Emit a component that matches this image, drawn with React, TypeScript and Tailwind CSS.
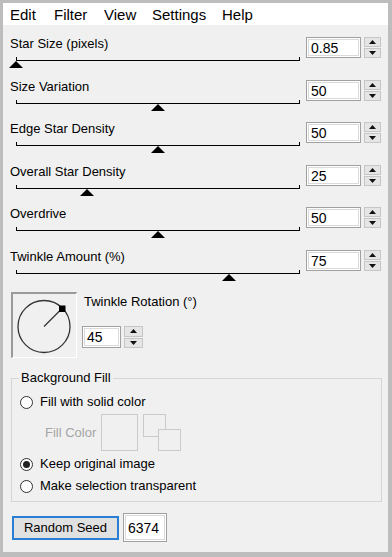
import clsx from 'clsx';

type SliderRow = { label: string; value: string; pct: number; h: string };

const rows: SliderRow[] = [
  { label: 'Star Size (pixels)', value: '0.85', pct: 0, h: 'h-[43px]' },
  { label: 'Size Variation', value: '50', pct: 50, h: 'h-[42px]' },
  { label: 'Edge Star Density', value: '50', pct: 50, h: 'h-[43px]' },
  { label: 'Overall Star Density', value: '25', pct: 25, h: 'h-[42px]' },
  { label: 'Overdrive', value: '50', pct: 50, h: 'h-[43px]' },
  { label: 'Twinkle Amount (%)', value: '75', pct: 75, h: 'h-[43px]' },
];

const menu = [
  { name: 'Edit', w: 'w-[44px]' },
  { name: 'Filter', w: 'w-[50px]' },
  { name: 'View', w: 'w-[48px]' },
  { name: 'Settings', w: 'w-[70px]' },
  { name: 'Help', w: 'w-[40px]' },
];

const NumBox: React.FC<{ value: string; className?: string }> = ({ value, className }) => (
  <div className={clsx('border border-[#a0a0a0] bg-white p-px', className)}>
    <div className="flex h-full items-center border border-[#dadada] pl-[2px] text-[14px] leading-none">
      {value}
    </div>
  </div>
);

const Spinner: React.FC<{ className?: string }> = ({ className }) => (
  <div className={clsx('flex flex-col gap-px', className)}>
    <div className="flex flex-1 items-center justify-center border border-[#c6c6c6] bg-[#e5e5e5]">
      <svg width="7" height="4" viewBox="0 0 7 4">
        <polygon points="3.5,0 7,4 0,4" fill="#111" />
      </svg>
    </div>
    <div className="flex flex-1 items-center justify-center border border-[#c6c6c6] bg-[#e5e5e5]">
      <svg width="7" height="4" viewBox="0 0 7 4">
        <polygon points="0,0 7,0 3.5,4" fill="#111" />
      </svg>
    </div>
  </div>
);

const Radio: React.FC<{ label: string; checked?: boolean; className?: string }> = ({
  label,
  checked,
  className,
}) => (
  <div className={clsx('flex h-[20px] items-center', className)}>
    <div className="ml-px flex h-[13px] w-[13px] items-center justify-center rounded-full border border-[#333] bg-white">
      {checked && <div className="h-[7px] w-[7px] rounded-full bg-[#222]" />}
    </div>
    <span className="ml-[7px] text-[13px] leading-4">{label}</span>
  </div>
);

export default function App() {
  return (
    <div className="flex h-[557px] w-[392px] flex-col bg-[#bdbdbd] pb-[5px] pl-[3px] pr-[4px] pt-[3px] font-['Liberation_Sans',Arial,sans-serif] text-black">
      {/* menu bar */}
      <div className="flex h-[22px] items-center bg-white pl-[7px] pt-[2px] text-[15px]">
        {menu.map((m) => (
          <span key={m.name} className={m.w}>
            {m.name}
          </span>
        ))}
      </div>

      <div className="flex-1 bg-[#f0f0f0] pt-[10px]">
        {rows.map((r) => (
          <div key={r.label} className={clsx('flex', r.h)}>
            <div className="w-[303px]">
              <div className="pl-[7px] pt-px text-[13px] leading-4">{r.label}</div>
              <div className="relative ml-[13px] mt-[5px] w-[284px]">
                <div className="h-[4px] border-x border-b border-black" />
                <svg
                  className="absolute top-[4px]"
                  style={{ left: `calc(${r.pct}% - 7px)` }}
                  width="14"
                  height="7"
                  viewBox="0 0 14 7"
                >
                  <polygon points="7,0 14,7 0,7" fill="#000" />
                </svg>
              </div>
            </div>
            <div className="mt-[2px] flex">
              <NumBox value={r.value} className="h-[21px] w-[55px]" />
              <Spinner className="ml-[3px] h-[21px] w-[17px]" />
            </div>
          </div>
        ))}

        {/* twinkle rotation */}
        <div className="flex h-[67px]">
          <div className="ml-[8px] mt-px h-[66px] w-[66px] border-b border-l-2 border-r border-t-2 border-b-white border-l-[#9a9a9a] border-r-white border-t-[#9a9a9a]">
            <svg width="63" height="63" viewBox="0 0 63 63">
              <circle cx="31" cy="32.5" r="26" fill="none" stroke="#333" strokeWidth="1.3" />
              <line x1="31" y1="32.5" x2="49" y2="14.5" stroke="#333" strokeWidth="1.3" />
              <rect x="46" y="11.5" width="6.5" height="6.5" fill="#000" />
            </svg>
          </div>
          <div className="ml-[5px] flex flex-col">
            <div className="mt-[3px] pl-[2px] text-[13px] leading-4">Twinkle Rotation (°)</div>
            <div className="mt-[16px] flex">
              <NumBox value="45" className="h-[22px] w-[39px]" />
              <Spinner className="ml-[3px] h-[22px] w-[19px]" />
            </div>
          </div>
        </div>

        {/* background fill */}
        <fieldset className="ml-[8px] mt-[12px] w-[371px] border border-[#d5d5d5] pb-[5px] pl-[7px]">
          <legend className="px-[2px] text-[13px] leading-4">Background Fill</legend>
          <Radio label="Fill with solid color" className="mt-[6px]" />
          <div className="mt-[2px] flex h-[37px] items-center">
            <span className="ml-[26px] w-[56px] text-[13px] leading-4 text-[#a5a5a5]">Fill Color</span>
            <div className="h-[37px] w-[37px] border border-[#cacaca]" />
            <svg className="ml-[5px]" width="38" height="37" viewBox="0 0 38 37">
              <rect x="0.5" y="0.5" width="22" height="22" fill="none" stroke="#cacaca" />
              <rect x="15.5" y="15.5" width="22" height="21" fill="#f0f0f0" stroke="#cacaca" />
            </svg>
          </div>
          <Radio label="Keep original image" checked className="mt-[3px]" />
          <Radio label="Make selection transparent" className="mt-[2px]" />
        </fieldset>

        {/* seed */}
        <div className="mt-[11px] flex items-center">
          <button className="ml-[9px] h-[24px] w-[107px] border-2 border-[#2a7fd4] bg-[#e1e1e1] text-[13px] leading-4">
            Random Seed
          </button>
          <NumBox value="6374" className="ml-[4px] h-[29px] w-[44px]" />
        </div>
      </div>
    </div>
  );
}
